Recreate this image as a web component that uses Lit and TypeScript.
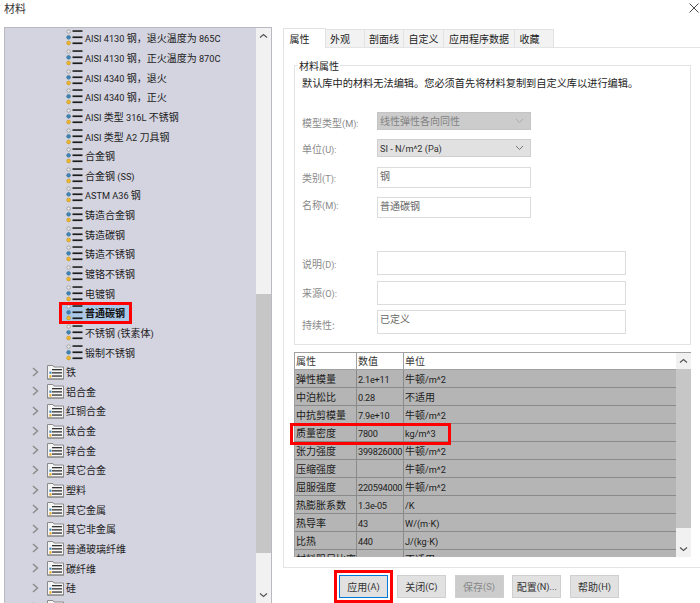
import { LitElement, html, css, svg } from "lit";
import { customElement } from "lit/decorators.js";

const leaves = [
  "AISI 4130 钢，退火温度为 865C", "AISI 4130 钢，正火温度为 870C", "AISI 4340 钢，退火", "AISI 4340 钢，正火",
  "AISI 类型 316L 不锈钢", "AISI 类型 A2 刀具钢", "合金钢", "合金钢 (SS)", "ASTM A36 钢", "铸造合金钢", "铸造碳钢",
  "铸造不锈钢", "镀铬不锈钢", "电镀钢", "普通碳钢", "不锈钢 (铁素体)", "锻制不锈钢",
];
const folders = ["铁", "铝合金", "红铜合金", "钛合金", "锌合金", "其它合金", "塑料", "其它金属", "其它非金属", "普通玻璃纤维", "碳纤维", "硅", ""];
const props = [
  ["弹性模量", "2.1e+11", "牛顿/m^2"], ["中泊松比", "0.28", "不适用"], ["中抗剪模量", "7.9e+10", "牛顿/m^2"],
  ["质量密度", "7800", "kg/m^3"], ["张力强度", "399826000", "牛顿/m^2"], ["压缩强度", "", "牛顿/m^2"],
  ["屈服强度", "220594000", "牛顿/m^2"], ["热膨胀系数", "1.3e-05", "/K"], ["热导率", "43", "W/(m·K)"],
  ["比热", "440", "J/(kg·K)"], ["材料阻尼比率", "", "不适用"],
];
const tabs = [
  { t: "属性", w: 43, pad: 10 }, { t: "外观", w: 39, pad: 10 }, { t: "剖面线", w: 39, pad: 0 },
  { t: "自定义", w: 40, pad: 0 }, { t: "应用程序数据", w: 71, pad: 0 }, { t: "收藏", w: 39, pad: 9 },
];

/* Latin runs sit a size below the CJK text, as they do in the reference */
const mix = (s: string) =>
  s.split(/([\x20-\x7e·]+)/).filter(Boolean).map((p) => (/^[\x20-\x7e·]+$/.test(p) ? html`<span class="lat">${p}</span>` : p));

const leafIcon = svg`<svg class="ic" width="17" height="17" viewBox="0 0 17 17">
  <circle cx="2.6" cy="2.6" r="1.7" fill="#eee" stroke="#999" stroke-width=".8"/>
  <circle cx="2.6" cy="8.3" r="1.9" fill="#3f86b8" stroke="#2a6286" stroke-width=".5"/>
  <circle cx="2.6" cy="14" r="1.9" fill="#f0b92c" stroke="#b98a16" stroke-width=".5"/>
  <rect x="6.5" y="1.2" width="10" height="1.7" fill="#2b2b2b"/>
  <rect x="6.5" y="7.4" width="10" height="1.7" fill="#1c1c1c"/>
  <rect x="6.5" y="13.4" width="10" height="1.7" fill="#1c1c1c"/>
</svg>`;
const folderIcon = svg`<svg class="ic" width="17" height="16" viewBox="0 0 17 16">
  <path d="M.5 15.5V1.5H6L7 3H16.5V15.5Z" fill="#f4f4f4" stroke="#8a8a8a"/>
  <rect x="1" y="14" width="15" height="1.5" fill="#a5a5a5"/>
  <rect x="5" y="5" width="10" height="1.3" fill="#333"/>
  <rect x="5" y="8.2" width="10" height="1.3" fill="#333"/>
  <rect x="5" y="11.4" width="10" height="1.3" fill="#333"/>
  <rect x="2.4" y="7.6" width="2" height="2.2" fill="#3f86b8"/>
  <rect x="2.4" y="11.2" width="2" height="2.4" fill="#e9ad28"/>
</svg>`;
const chevron = svg`<svg class="chev" width="7" height="10" viewBox="0 0 7 10"><path d="M1 1L5.5 5L1 9" fill="none" stroke="#8c8c8c" stroke-width="1.5"/></svg>`;
const arrowUp = svg`<svg width="9" height="6" viewBox="0 0 9 6"><path d="M1 4.5L4.5 1.5L8 4.5" fill="none" stroke="#555" stroke-width="1.2"/></svg>`;
const arrowDown = svg`<svg width="9" height="6" viewBox="0 0 9 6"><path d="M1 1.5L4.5 4.5L8 1.5" fill="none" stroke="#555" stroke-width="1.2"/></svg>`;
const selArrow = svg`<svg width="9" height="6" viewBox="0 0 9 6"><path d="M1 1L4.5 4.5L8 1" fill="none" stroke="currentColor" stroke-width="1"/></svg>`;

@customElement("app-root")
export class AppRoot extends LitElement {
  static styles = css`
    :host { display: block; width: 700px; height: 603px; overflow: hidden; background: #fff; color: #222;
      font-family: "Noto Sans CJK SC", sans-serif; font-size: 10px; }
    * { box-sizing: border-box; }
    .lat { font-family: Roboto, sans-serif; font-size: 9.2px; }
    .title { height: 27px; display: flex; justify-content: space-between; padding: 0 1px 0 4px; font-size: 11px; line-height: 17px; color: #333; }
    .close { margin: 3px 0 0 0; }
    .main { display: flex; height: 576px; }
    .tree { width: 268px; margin-left: 4px; height: 576px; border: 1px solid #b9b9c4; border-bottom: 0; background: #d4d4e0; display: flex; overflow: hidden; }
    .rows { flex: 1; min-width: 0; overflow: hidden; }
    .row { height: 19.65px; display: flex; align-items: center; white-space: nowrap; }
    .leaf { padding-left: 60px; }
    .folder { padding-left: 27px; }
    .chev { margin-right: 8px; }
    .folder .ic { margin-right: 2px; }
    .leafwrap { display: inline-flex; align-items: center; height: 17px; padding: 0 1px; }
    .leaf .ic { margin-right: 2px; white-space: pre; flex: none; }
    .txt { white-space: pre; }
    .sel { height: 16px; margin-left: -3px; padding: 0 4px 0 4px; background: #a9c7e6; font-weight: 600; color: #111; outline: 3px solid #f00; }
    .sb { width: 15px; flex: none; display: flex; flex-direction: column; background: #f1f1f1; align-items: center; }
    .arrow { height: 16px; flex: none; display: flex; align-items: center; justify-content: center; }
    .thumb { width: 100%; background: #c6c6c6; }
    .thumb.tall { margin-top: 250px; height: 259px; }
    .thumb.short { height: 159px; }
    .gap { flex: 1; }
    .right { margin-left: 11px; width: 417px; }
    .tabs { display: flex; height: 20px; align-items: flex-end; }
    .tab { height: 18px; background: #f2f2f2; border: 1px solid #e2e2e2; border-bottom: 0; border-left: 0; display: flex; align-items: center; justify-content: center; }
    .tab.on { height: 20px; background: #fff; border-left: 1px solid #e2e2e2; margin-bottom: -1px; z-index: 1; position: relative; padding-bottom: 1px; }
    .pane { height: 521px; border: 1px solid #e4e4e4; border-right: 0; padding: 17px 9px 0 10px; }
    .group { position: relative; height: 280px; border: 1px solid #e3e3e3; padding: 9px 0 0 7px; }
    .legend { position: absolute; left: 3px; top: -7px; background: #fff; padding: 0 1px; line-height: 13px; }
    .note { line-height: 15px; color: #222; height: 33px; font-size: 10.2px; }
    .f { display: flex; }
    .lab { width: 75px; color: #8a8a8a; flex: none; }
    .sel-box { width: 154px; height: 18px; display: flex; align-items: center; justify-content: space-between; padding: 0 6px 0 2px; border: 1px solid #cfcfcf; background: #e1e1e1; color: #333; }
    .sel-box.dis { background: #ccc; border-color: #c4c4c4; color: #838383; }
    .sel-box svg { color: #777; }
    .sel-box.dis svg { color: #aaa; }
    .inp { width: 154px; border: 1px solid #dcdcdc; color: #666; padding: 0 2px; line-height: 15px; }
    .inp.w { width: 249px; }
    .r1 { height: 18px; margin-top: 4px; line-height: 22px; }
    .r2 { height: 18px; margin-top: 9px; line-height: 20px; }
    .r3 { height: 21px; margin-top: 10px; line-height: 22px; }
    .r4 { height: 21px; margin-top: 9px; line-height: 16px; }
    .r5 { height: 24px; margin-top: 33px; line-height: 26px; }
    .r6 { height: 24px; margin-top: 6px; line-height: 24px; }
    .r7 { height: 24px; margin-top: 5px; line-height: 30px; }
    .table { position: relative; margin-top: 7px; height: 205px; display: flex; border-top: 1px solid #a0a0a0; border-left: 1px solid #a0a0a0; }
    .cells { flex: 1; min-width: 0; height: 204px; overflow: hidden; background: #fff; }
    .tr { display: grid; grid-template-columns: 62px 47px 1fr; height: 18px; background: #b5b5b5; border-bottom: 1px solid #8a8a8a; color: #1c1c1c; line-height: 17px; }
    .tr.h { background: #fff; border-bottom: 1px solid #a0a0a0; height: 16.5px; color: #333; line-height: 16px; }
    .tr > div { padding-left: 1px; border-right: 1px solid #8a8a8a; white-space: pre; overflow: hidden; }
    .tr.h > div { border-right-color: #a0a0a0; }
    .tr > div:last-child { border-right: 0; }
    .val { letter-spacing: -0.25px; }
    .mark { position: absolute; left: -5px; top: 70px; width: 161px; height: 21.5px; border: 3px solid #f00; pointer-events: none; }
    .btns { display: flex; gap: 8.75px; padding: 7px 0 0 56px; }
    .btn { width: 49px; height: 23px; display: flex; align-items: center; justify-content: center; background: #e1e1e1; border: 1px solid #cfcfcf; color: #333; }
    .btn.def { border-color: #0078d7; outline: 3px solid #f00; outline-offset: 2px; }
    .btn.dis { background: #ccc; color: #888; }
  `;

  render() {
    return html`
      <div class="title"><span>材料</span>
        <svg class="close" width="10" height="10" viewBox="0 0 10 10"><path d="M.5 .5L9.5 9.5M9.5 .5L.5 9.5" stroke="#333" stroke-width=".9"/></svg>
      </div>
      <div class="main">
        <div class="tree">
          <div class="rows">
            ${leaves.map((t) => html`<div class="row leaf"><span class="leafwrap ${t === "普通碳钢" ? "sel" : ""}">${leafIcon}<span class="txt">${mix(t)}</span></span></div>`)}
            ${folders.map((t) => html`<div class="row folder">${chevron}${folderIcon}${t}</div>`)}
          </div>
          <div class="sb">
            <div class="arrow">${arrowUp}</div>
            <div class="thumb tall"></div>
            <div class="gap"></div>
            <div class="arrow">${arrowDown}</div>
          </div>
        </div>
        <div class="right">
          <div class="tabs">${tabs.map((t, i) => html`<div class="tab ${i === 0 ? "on" : ""}" style="width:${t.w}px;padding-right:${t.pad}px">${t.t}</div>`)}</div>
          <div class="pane">
            <div class="group">
              <div class="legend">材料属性</div>
              <div class="note">默认库中的材料无法编辑。您必须首先将材料复制到自定义库以进行编辑。</div>
              <div class="f r1"><div class="lab">${mix("模型类型(M):")}</div><div class="sel-box dis">线性弹性各向同性 ${selArrow}</div></div>
              <div class="f r2"><div class="lab">${mix("单位(U):")}</div><div class="sel-box"><span class="txt">${mix("SI - N/m^2 (Pa)")}</span>${selArrow}</div></div>
              <div class="f r3"><div class="lab">${mix("类别(T):")}</div><div class="inp">钢</div></div>
              <div class="f r4"><div class="lab">${mix("名称(M):")}</div><div class="inp">普通碳钢</div></div>
              <div class="f r5"><div class="lab">${mix("说明(D):")}</div><div class="inp w"></div></div>
              <div class="f r6"><div class="lab">${mix("来源(O):")}</div><div class="inp w"></div></div>
              <div class="f r7"><div class="lab">持续性:</div><div class="inp w">已定义</div></div>
            </div>
            <div class="table">
              <div class="cells">
                <div class="tr h"><div>属性</div><div>数值</div><div>单位</div></div>
                ${props.map((r) => html`<div class="tr"><div>${r[0]}</div><div class="val">${mix(r[1])}</div><div>${mix(r[2])}</div></div>`)}
              </div>
              <div class="sb">
                <div class="arrow">${arrowUp}</div>
                <div class="thumb short"></div>
                <div class="gap"></div>
                <div class="arrow">${arrowDown}</div>
              </div>
              <div class="mark"></div>
            </div>
          </div>
          <div class="btns">
            <div class="btn def">${mix("应用(A)")}</div>
            <div class="btn">${mix("关闭(C)")}</div>
            <div class="btn dis">${mix("保存(S)")}</div>
            <div class="btn">${mix("配置(N)...")}</div>
            <div class="btn">${mix("帮助(H)")}</div>
          </div>
        </div>
      </div>`;
  }
}
